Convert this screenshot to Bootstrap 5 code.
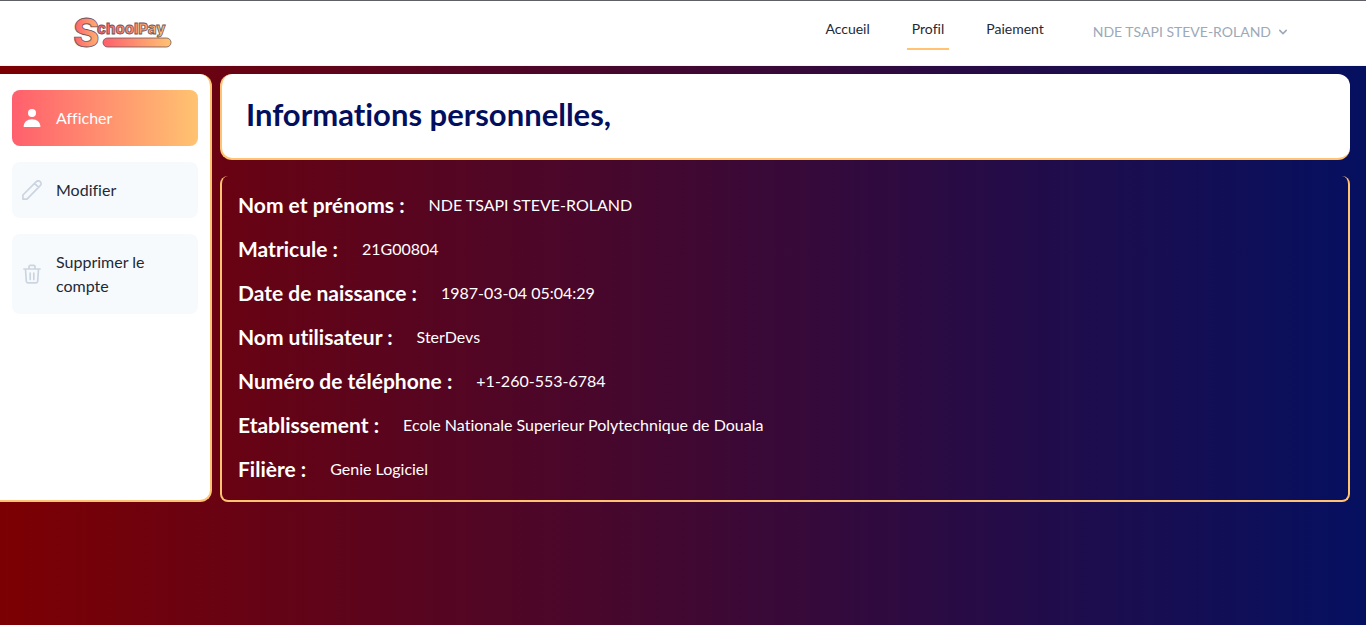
<!DOCTYPE html>
<html lang="fr">
<head>
<meta charset="utf-8">
<meta name="viewport" content="width=device-width, initial-scale=1">
<title>SchoolPay - Profil</title>
<link href="https://cdn.jsdelivr.net/npm/bootstrap@5.3.0/dist/css/bootstrap.min.css" rel="stylesheet">
<style>
  :root { --navy: #020f5e; --amber: #ffc371; --coral: #ff5f6d; }
  body {
    min-height: 100vh;
    font-family: Lato, sans-serif;
    font-variant-ligatures: no-common-ligatures;
    color: #1f2937;
    background: linear-gradient(to right, #7c0003, #051060) fixed;
  }
  .topbar { border-top: 1px solid #5f5f66; border-bottom: 1px solid #f3f4f6; height: 66px; }
  .topbar-inner { max-width: 1280px; }
  .topbar a { text-decoration: none; }
  .topbar .nav-links { gap: 32px; }
  .topbar .nav-link {
    font-size: 14px; line-height: 20px; color: #1f2937;
    padding: 3px 5px 9px; border-bottom: 2px solid transparent;
  }
  .topbar .nav-link.active { border-color: var(--amber); }
  .topbar .user-toggle { margin-left: 20px; padding: 0 0 2px; font-size: 14px; line-height: 20px; color: #9ca9b9; border: 0; }
  .brand-logo { overflow: visible; }
  .sidebar {
    flex: 0 0 212px; padding: 16px 12px;
    border: solid var(--amber); border-width: 0 2px 2px 0; border-radius: 0 12px 12px 0;
  }
  .side-link {
    padding: 16px 10px; gap: 14px; line-height: 24px; border-radius: 8px;
    color: #1f2937; background: #f6fafd; text-decoration: none;
  }
  .side-link svg { color: #cbd5e1; }
  .side-link.active { color: #fff; background: linear-gradient(to right, var(--coral), var(--amber)); }
  .side-link.active svg { color: #fff; }
  .title-box {
    padding: 22px 24px 26px; border: solid var(--amber); border-width: 0 0 2px 2px; border-radius: 12px;
  }
  .title-box h1 { font-size: 31px; line-height: 36px; font-weight: 700; color: var(--navy); }
  .info-box { padding: 15px 16px 17px; border: solid var(--amber); border-width: 0 2px 2px; border-radius: 8px; }
  .info-box dt { font-size: 21px; line-height: 28px; }
  @media (max-width: 767px) {
    .topbar { height: auto; }
    .sidebar { flex-basis: auto; border-radius: 12px; }
  }
</style>
</head>
<body>
<header class="topbar bg-white">
  <div class="topbar-inner h-100 mx-auto px-3 px-md-4 px-lg-0 d-flex flex-wrap align-items-center justify-content-between">
    <a href="#" class="ms-lg-4 ps-lg-2" aria-label="SchoolPay">
      <svg class="brand-logo d-block" width="98" height="60" viewBox="0 -13 98 60" stroke="#6b5560" stroke-width="0.8">
        <defs>
          <linearGradient id="gS" x1="0" x2="1"><stop stop-color="#ff5f6d"/><stop offset="1" stop-color="#ffb46f"/></linearGradient>
          <linearGradient id="gB" x1="0" x2="1"><stop stop-color="#ff5f6d"/><stop offset="1" stop-color="#ffc371"/></linearGradient>
        </defs>
        <text x="-2" y="31" font-family="Inter, sans-serif" font-size="40" font-weight="800" fill="url(#gS)">S</text>
        <text x="22" y="18" font-family="Inter, sans-serif" font-size="15" font-weight="800" fill="url(#gB)">choolPay</text>
        <rect x="28" y="22" width="68" height="9" rx="4.500" fill="url(#gB)"/>
      </svg>
    </a>
    <nav class="d-flex flex-wrap align-items-center gap-4 me-lg-4 pe-lg-2" aria-label="Navigation principale">
      <div class="nav-links d-flex flex-wrap">
        <a class="nav-link" href="#">Accueil</a>
        <a class="nav-link active" href="#" aria-current="page">Profil</a>
        <a class="nav-link" href="#">Paiement</a>
      </div>
      <button type="button" class="btn user-toggle d-flex align-items-center gap-1">NDE TSAPI STEVE-ROLAND
        <svg width="16" height="16" viewBox="0 0 20 20" fill="currentColor" aria-hidden="true"><path fill-rule="evenodd" clip-rule="evenodd" d="M5.293 7.293a1 1 0 011.414 0L10 10.586l3.293-3.293a1 1 0 111.414 1.414l-4 4a1 1 0 01-1.414 0l-4-4a1 1 0 010-1.414z"/></svg>
      </button>
    </nav>
  </div>
</header>

<div class="d-flex flex-column flex-md-row gap-2 pt-2">
  <aside class="sidebar bg-white d-flex flex-column gap-3">
    <a href="#" class="side-link active d-flex align-items-center" aria-current="page">
      <svg class="flex-shrink-0" width="20" height="20" viewBox="0 0 20 20" fill="currentColor" aria-hidden="true"><circle cx="10" cy="5" r="4"/><path d="M1.600 19C1.600 14 5 11.200 10 11.200S18.400 14 18.400 19z"/></svg>
      <span>Afficher</span>
    </a>
    <a href="#" class="side-link d-flex align-items-center">
      <svg class="flex-shrink-0" width="20" height="20" viewBox="0 0 20 20" fill="none" stroke="currentColor" stroke-width="1.700" stroke-linejoin="round" aria-hidden="true"><path d="M.900 19.100V15L14.300 1.700a2.600 2.600 0 0 1 3.900 0a2.600 2.600 0 0 1 0 3.900L5 19.100zM12.600 3.400l4 4"/></svg>
      <span>Modifier</span>
    </a>
    <a href="#" class="side-link d-flex align-items-center">
      <svg class="flex-shrink-0" width="20" height="20" viewBox="0 0 20 20" fill="none" stroke="currentColor" stroke-width="1.700" stroke-linejoin="round" stroke-linecap="round" aria-hidden="true"><path d="M2 5h16M3.500 5l.800 12.300a1.700 1.700 0 0 0 1.700 1.600h8a1.700 1.700 0 0 0 1.700-1.600L16.500 5M7 5V2.600A1.200 1.200 0 0 1 8.200 1.400h3.600A1.200 1.200 0 0 1 13 2.600V5M8.200 9v6.500M11.800 9v6.500"/></svg>
      <span>Supprimer le compte</span>
    </a>
  </aside>

  <main class="flex-grow-1 d-flex flex-column gap-3 pe-3">
    <div class="title-box bg-white">
      <h1 class="m-0">Informations personnelles,</h1>
    </div>
    <dl class="info-box m-0 text-white d-flex flex-column gap-3">
      <div class="d-flex flex-wrap align-items-center"><dt class="me-4">Nom et prénoms :</dt><dd class="m-0">NDE TSAPI STEVE-ROLAND</dd></div>
      <div class="d-flex flex-wrap align-items-center"><dt class="me-4">Matricule :</dt><dd class="m-0">21G00804</dd></div>
      <div class="d-flex flex-wrap align-items-center"><dt class="me-4">Date de naissance :</dt><dd class="m-0">1987-03-04 05:04:29</dd></div>
      <div class="d-flex flex-wrap align-items-center"><dt class="me-4">Nom utilisateur :</dt><dd class="m-0">SterDevs</dd></div>
      <div class="d-flex flex-wrap align-items-center"><dt class="me-4">Numéro de téléphone :</dt><dd class="m-0">+1-260-553-6784</dd></div>
      <div class="d-flex flex-wrap align-items-center"><dt class="me-4">Etablissement :</dt><dd class="m-0">Ecole Nationale Superieur Polytechnique de Douala</dd></div>
      <div class="d-flex flex-wrap align-items-center"><dt class="me-4">Filière :</dt><dd class="m-0">Genie Logiciel</dd></div>
    </dl>
  </main>
</div>
<script src="https://cdn.jsdelivr.net/npm/bootstrap@5.3.0/dist/js/bootstrap.bundle.min.js"></script>
</body>
</html>
